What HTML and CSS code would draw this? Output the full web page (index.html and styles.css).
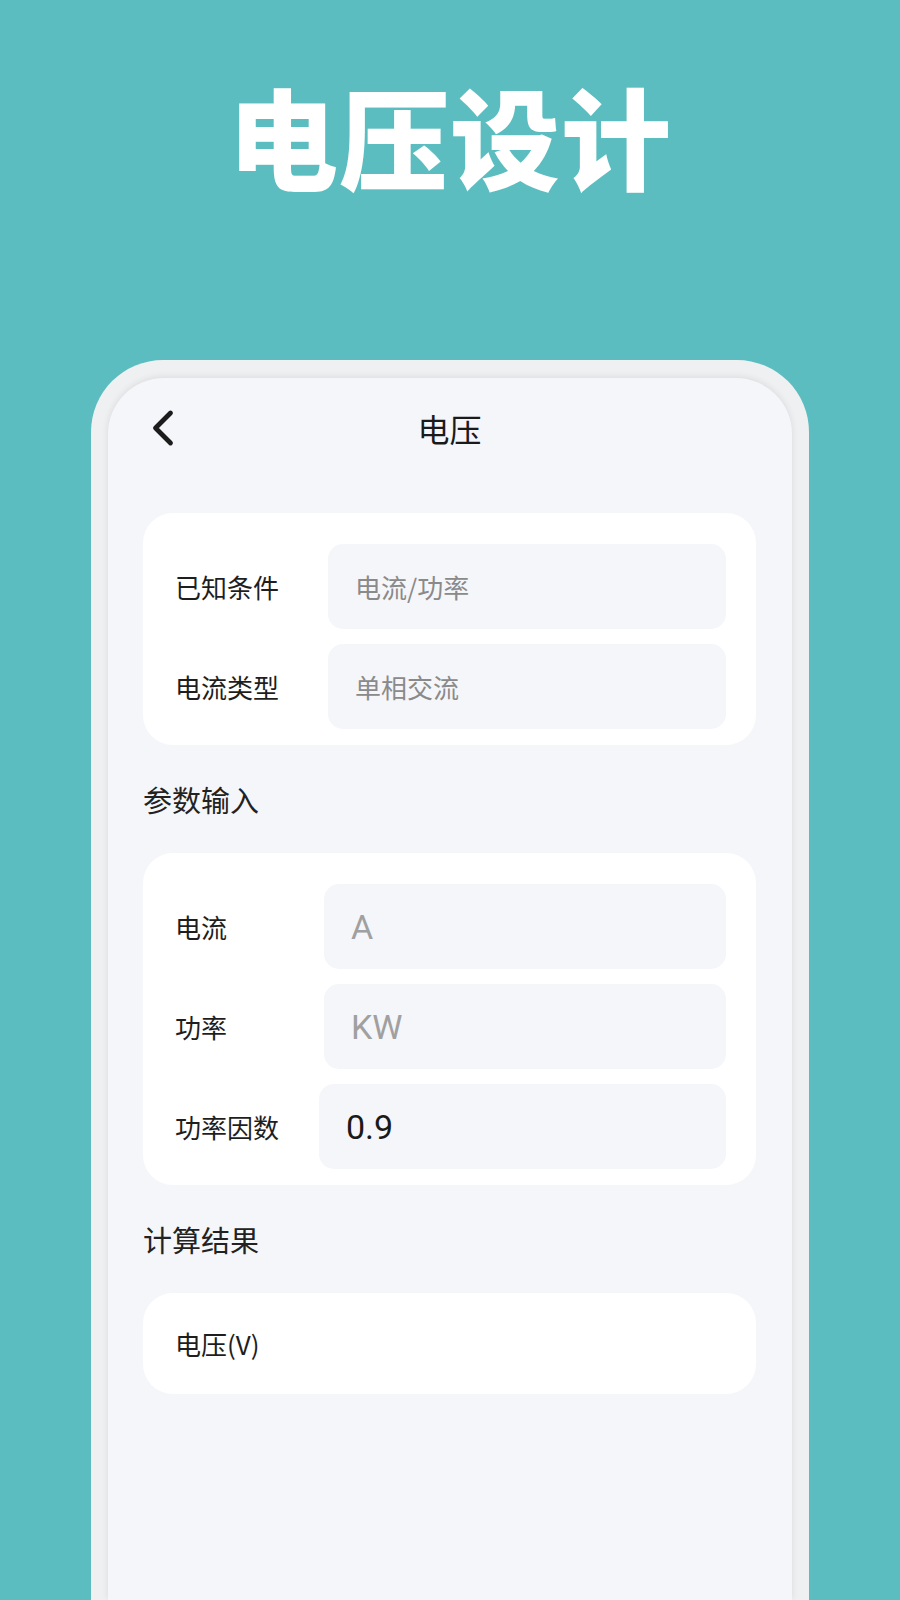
FILE: index.html
```html
<!DOCTYPE html>
<html lang="zh-CN">
<head>
<meta charset="utf-8">
<title>电压设计</title>
<link rel="stylesheet" href="styles.css">
</head>
<body>
<div class="page">
  <h1 class="hero">电压设计</h1>

  <div class="device">
    <div class="screen">
      <header class="topbar">
        <span class="back" aria-label="返回">
          <svg width="24" height="38" viewBox="0 0 24 38">
            <path d="M19.5 4 L4.5 19 L19.5 34" fill="none" stroke="#1c1c1c" stroke-width="4.8" stroke-linecap="round" stroke-linejoin="round"/>
          </svg>
        </span>
        <span class="topbar-title">电压</span>
        <span></span>
      </header>

      <section class="card card--form">
        <div class="field">
          <span class="field-label w153">已知条件</span>
          <div class="field-box"><span class="select-text">电流/功率</span></div>
        </div>
        <div class="field">
          <span class="field-label w153">电流类型</span>
          <div class="field-box"><span class="select-text">单相交流</span></div>
        </div>
      </section>

      <h2 class="section-title">参数输入</h2>

      <section class="card card--form">
        <div class="field">
          <span class="field-label w149">电流</span>
          <div class="field-box"><span class="placeholder">A</span></div>
        </div>
        <div class="field">
          <span class="field-label w149">功率</span>
          <div class="field-box"><span class="placeholder">KW</span></div>
        </div>
        <div class="field">
          <span class="field-label w144">功率因数</span>
          <div class="field-box"><span class="value">0.9</span></div>
        </div>
      </section>

      <h2 class="section-title">计算结果</h2>

      <section class="card card--result">
        <span class="field-label">电压(V)</span>
      </section>
    </div>
  </div>
</div>
</body>
</html>
```

FILE: styles.css
```css
html, body {
  margin: 0;
  padding: 0;
}

body {
  background: #5bbdbf;
  font-family: "Noto Sans CJK SC", "Noto Sans", sans-serif;
  color: #222222;
}

.page {
  width: 900px;
  height: 1600px;
  overflow: hidden;
  display: flex;
  flex-direction: column;
  align-items: center;
}

/* Big headline */
.hero {
  margin: 68px 0 0;
  height: 132px;
  font-size: 110px;
  line-height: 132px;
  font-weight: 900;
  color: #ffffff;
  letter-spacing: 1px;
}

/* Phone frame */
.device {
  margin-top: 160px;
  width: 718px;
  flex: 1;
  box-sizing: border-box;
  padding: 18px 17px 0;
  background: #eff0f2;
  border-radius: 72px 72px 0 0;
  display: flex;
}

.screen {
  flex: 1;
  background: #f5f6fa;
  border-radius: 56px 56px 0 0;
  box-shadow: 0 -1px 7px rgba(0, 0, 0, 0.09);
  padding: 0 36px 0 35px;
  display: flex;
  flex-direction: column;
}

/* Navigation bar */
.topbar {
  height: 100px;
  display: grid;
  grid-template-columns: 1fr auto 1fr;
  align-items: center;
  margin-bottom: 35px;
}

.back {
  display: flex;
  align-items: center;
  padding-left: 8px;
  height: 38px;
}

.topbar-title {
  font-size: 32px;
  line-height: 40px;
  color: #1a1a1a;
}

/* Cards */
.card {
  background: #ffffff;
  border-radius: 30px;
}

.card--form {
  padding: 31px 30px 16px 32px;
  display: flex;
  flex-direction: column;
  gap: 15px;
}

.card--result {
  height: 101px;
  padding: 0 32px;
  display: flex;
  align-items: center;
}

.field {
  display: flex;
  align-items: center;
}

.field-label {
  font-size: 26px;
  line-height: 34px;
  color: #1e1e1e;
  flex: none;
}

.w153 { width: 153px; }
.w149 { width: 149px; }
.w144 { width: 144px; }

.field-box {
  flex: 1;
  height: 85px;
  background: #f5f6fa;
  border-radius: 15px;
  display: flex;
  align-items: center;
  padding-left: 27px;
}

.select-text {
  font-size: 26px;
  color: #8a8a8a;
}

.placeholder,
.value {
  font-family: Roboto, "Noto Sans", sans-serif;
  font-size: 34px;
}

.placeholder {
  color: #a0a0a0;
}

.value {
  color: #1a1a1a;
}

/* Section headings between cards */
.section-title {
  margin: 0;
  height: 108px;
  display: flex;
  align-items: center;
  font-size: 29px;
  font-weight: 400;
  color: #222222;
}
```
